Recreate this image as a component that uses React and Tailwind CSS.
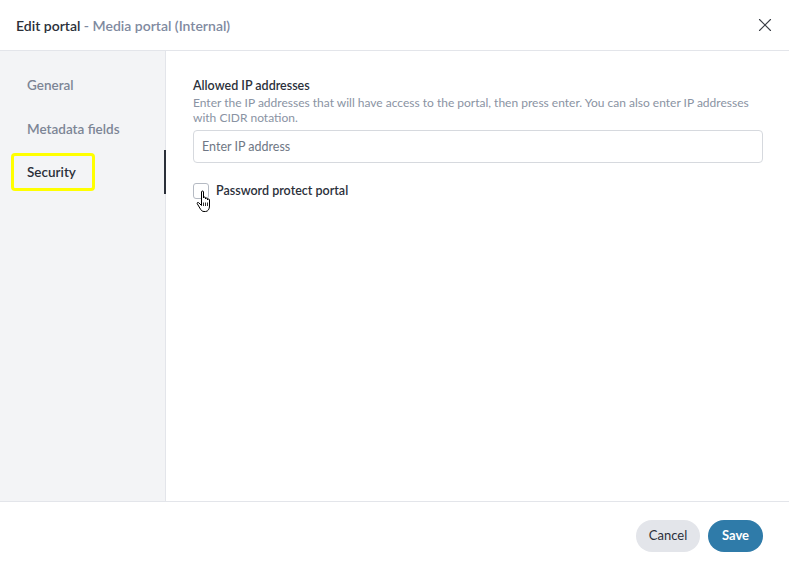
import { X } from "lucide-react";

// ─── Sidebar nav ─────────────────────────────────────────────────────────────
function Sidebar() {
  const items = ["General", "Metadata fields"];
  return (
    <aside className="w-[166px] shrink-0 bg-[#f3f4f6] border-r border-[#e3e5ea] pt-[12px]">
      {items.map((label) => (
        <div key={label} className="pl-[27px] h-[44px] flex items-center text-[13.5px] font-semibold text-[#7c8595]">
          {label}
        </div>
      ))}
      <div className="relative h-[44px] -mt-[1px] flex items-center">
        <div className="ml-[11px] h-[38px] w-[84px] border-[3px] border-[#ffff00] rounded-[4px] flex items-center pl-[13px] text-[13.5px] font-semibold text-[#2b303a]">
          Security
        </div>
        <div className="absolute right-[-1px] top-0 h-full w-[2px] bg-[#2b303a]" />
      </div>
    </aside>
  );
}

function HandCursor() {
  return (
    <svg className="absolute left-[2px] top-[6px]" width="16" height="23" viewBox="0 0 16 23">
      <path
        d="M5.5 2a1 1 0 0 1 2 0V8a1 1 0 0 1 2 0V9a1 1 0 0 1 2 0V10a1 1 0 0 1 2 0V16c0 3-1.5 5.5-4 5.5H8c-1.5 0-2.5-.8-3.3-2L1.3 13.8c-.6-1 .6-1.9 1.4-1.1L5.5 15.5Z"
        fill="#fff"
        stroke="#000"
        strokeWidth="1"
        strokeLinejoin="round"
      />
      <path d="M7.5 12.5v3.5M9.5 12.5v3.5M11.5 12.5v3.5" stroke="#000" strokeWidth="0.8" />
    </svg>
  );
}

// ─── Security panel ──────────────────────────────────────────────────────────
function SecurityPanel() {
  return (
    <main className="flex-1 pl-[27px] pr-[26px] pt-[27px]">
      <div className="text-[12.5px] font-semibold text-[#2b303a] leading-[16px]">Allowed IP addresses</div>
      <p className="text-[12px] text-[#8a93a3] leading-[15px] mt-[1px]">
        Enter the IP addresses that will have access to the portal, then press enter. You can also enter IP addresses
        with CIDR notation.
      </p>
      <input
        className="mt-[5px] w-full h-[33px] rounded-[4px] border border-[#d6d9de] px-[8px] text-[12.5px] text-[#2b303a] placeholder:text-[#6f7785] outline-none"
        placeholder="Enter IP address"
      />
      <label className="mt-[19px] flex items-center gap-[7px]">
        <span className="relative w-[16px] h-[16px] rounded-[3px] border border-[#b5bac3] bg-white">
          <HandCursor />
        </span>
        <span className="text-[12.5px] font-semibold text-[#2b303a]">Password protect portal</span>
      </label>
    </main>
  );
}

// ─── Root App ─────────────────────────────────────────────────────────────────
export default function App() {
  return (
    <div className="w-[789px] h-[567px] bg-white flex flex-col font-['Lato',sans-serif]">
      <header className="h-[51px] shrink-0 border-b border-[#e3e5ea] flex items-center justify-between pl-[16px] pr-[13px]">
        <h1 className="text-[14px] font-semibold text-[#2b303a]">
          Edit portal <span className="text-[#7f8aa0]">- Media portal (Internal)</span>
        </h1>
        <X size={22} strokeWidth={1.2} className="text-[#3b3f47]" />
      </header>
      <div className="flex flex-1 min-h-0">
        <Sidebar />
        <SecurityPanel />
      </div>
      <footer className="h-[66px] shrink-0 border-t border-[#e3e5ea] flex items-center justify-end gap-[8px] pr-[26px] pt-[2px]">
        <button className="h-[32px] w-[64px] rounded-full bg-[#e3e5ea] text-[13px] text-[#2b303a]">Cancel</button>
        <button className="h-[32px] w-[55px] rounded-full bg-[#2f7ba9] text-[13px] font-bold text-white">Save</button>
      </footer>
    </div>
  );
}
